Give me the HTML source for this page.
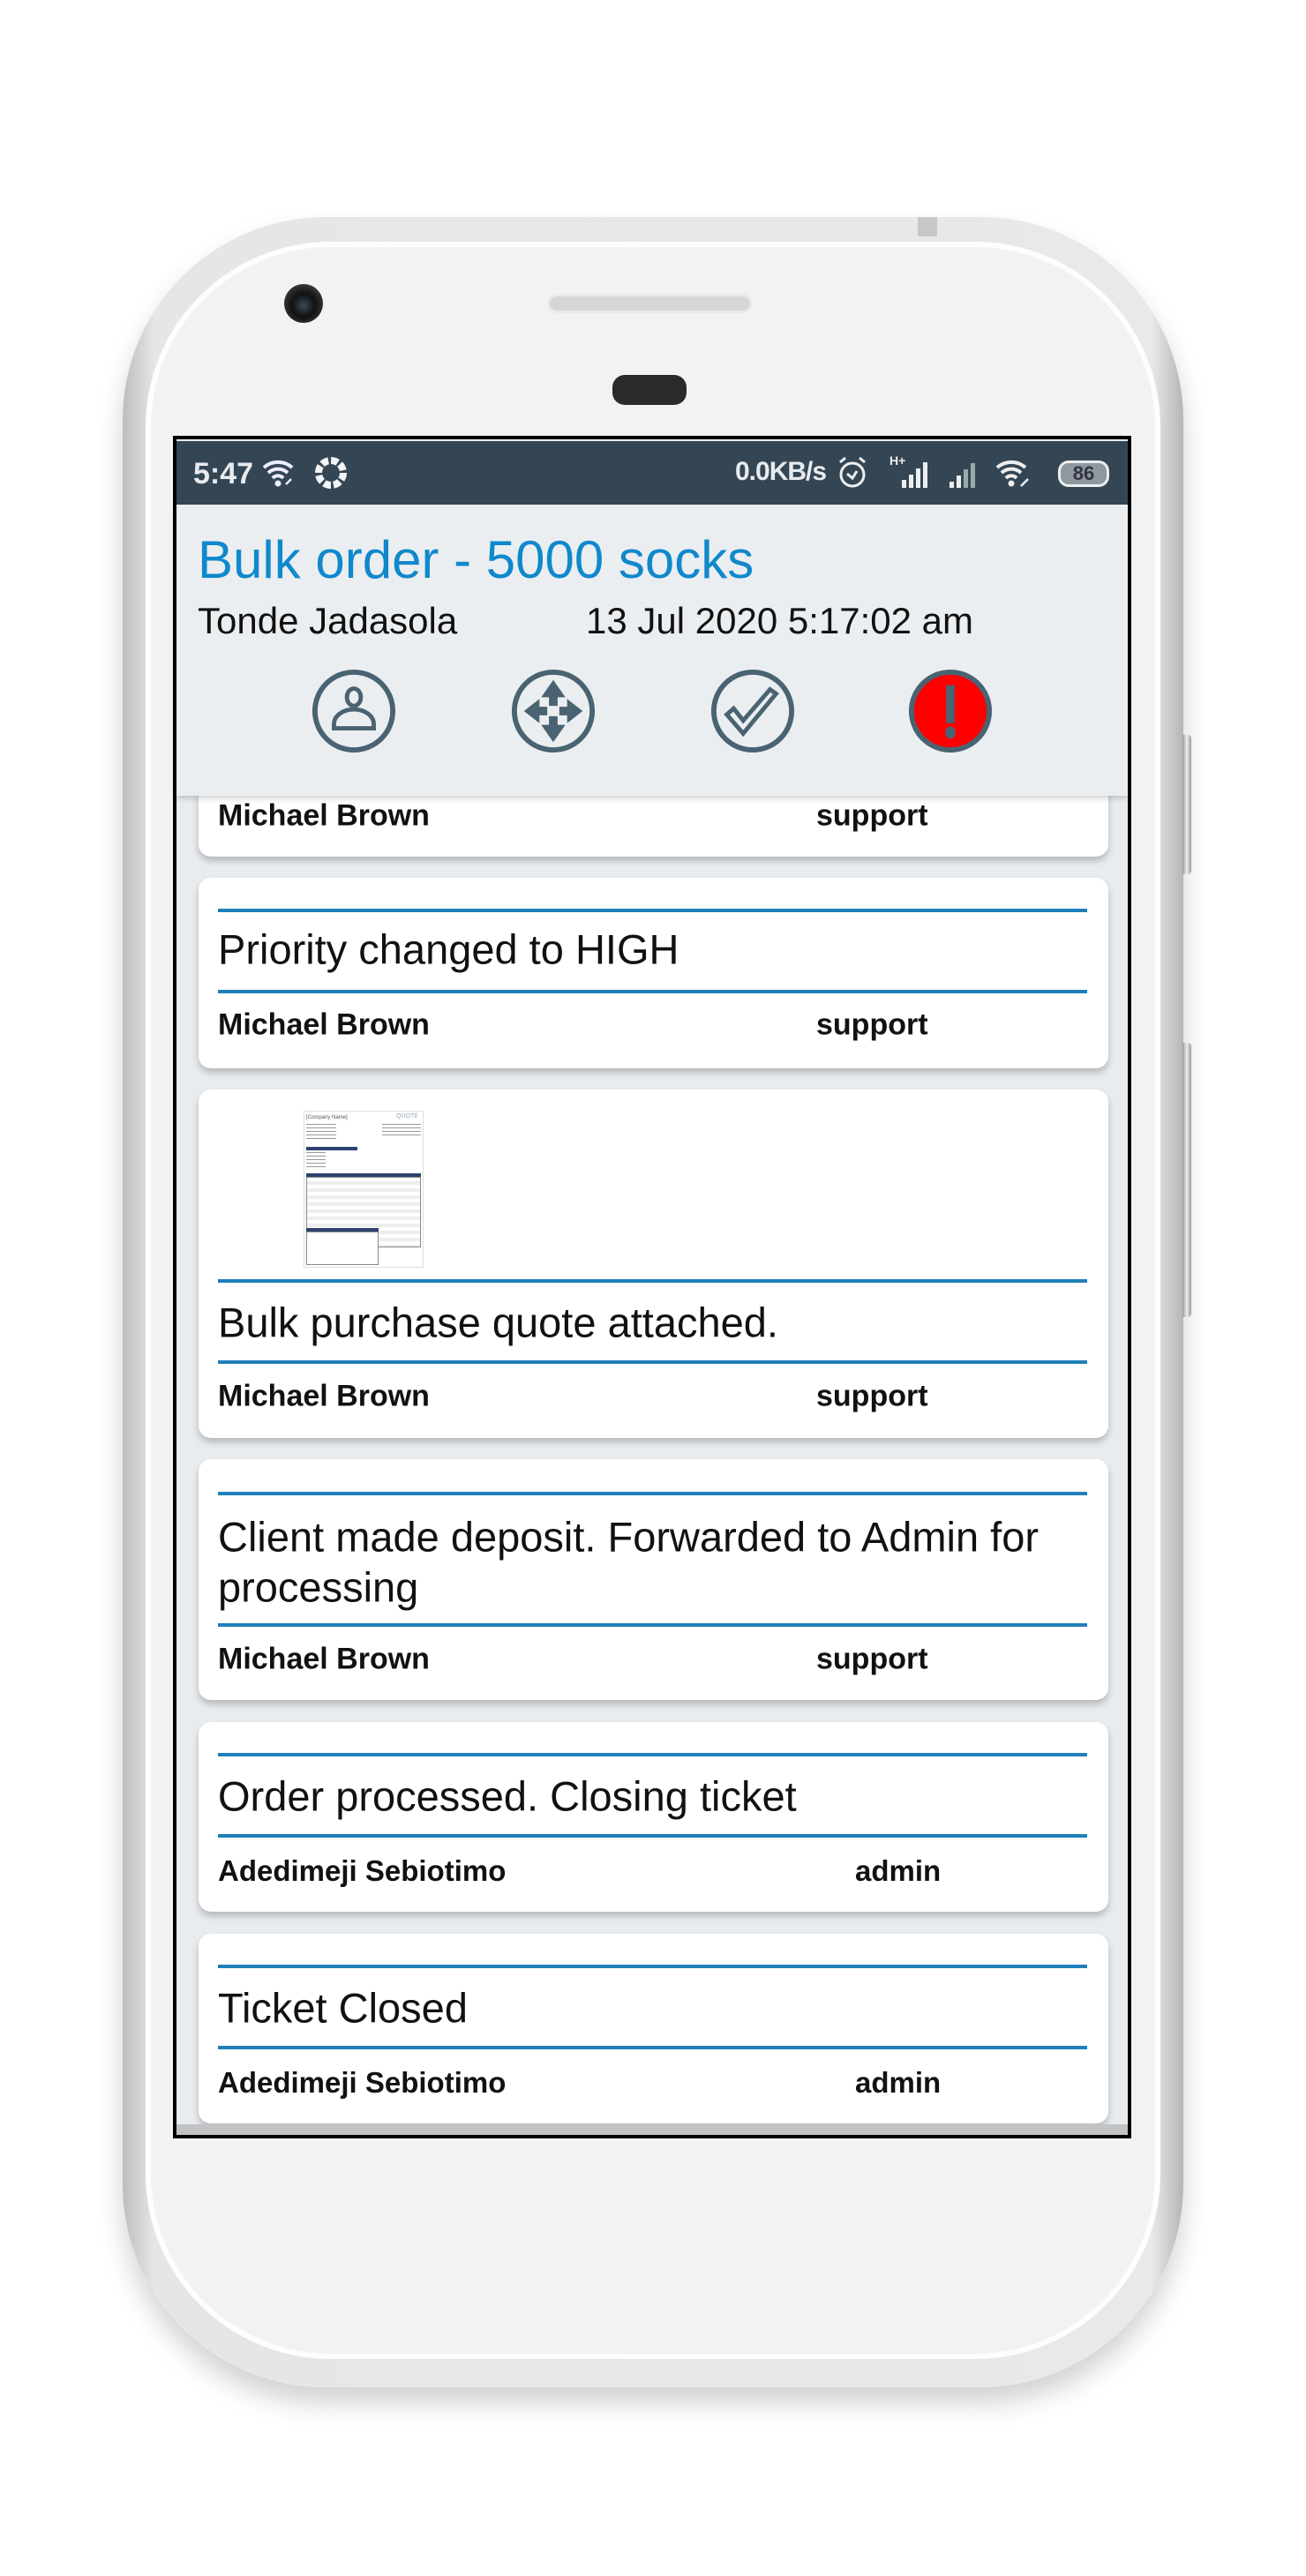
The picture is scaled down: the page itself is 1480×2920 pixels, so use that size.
<!DOCTYPE html>
<html><head><meta charset="utf-8">
<style>
*{margin:0;padding:0;box-sizing:border-box}
body{width:1480px;height:2920px;background:#fff;position:relative;overflow:hidden;font-family:"Liberation Sans",sans-serif}
.a{position:absolute}
.phone{left:139px;top:246px;width:1202px;height:2460px;border-radius:230px;background:linear-gradient(90deg,#bdbdbd,#e6e6e6 3%,#e9e9e9 97%,#b5b5b5);box-shadow:0 18px 30px rgba(0,0,0,.18)}
.bezel{left:165px;top:274px;width:1150px;height:2400px;border-radius:210px;background:#f2f2f2;border:6px solid #fdfdfd}
.screen{left:196px;top:494px;width:1086px;height:1930px;border:4px solid #000;background:#e9ecef;overflow:hidden}
.card{position:absolute;left:225px;width:1031px;background:#fff;border-radius:14px;box-shadow:0 5px 8px rgba(0,0,0,.22)}
.ln{position:absolute;left:247px;width:985px;height:4px;background:#1f7fba}
.msg{position:absolute;left:247px;font-size:47px;color:#111;line-height:57px;transform:translateY(-50%);white-space:nowrap}
.ft{position:absolute;font-size:34px;font-weight:bold;color:#111;transform:translateY(-50%);white-space:nowrap}
.ft2{font-size:33px}
.ic{position:absolute;top:757px;width:98px;height:98px}
</style></head><body>
<div class="a phone"></div>
<div class="a" style="left:1340px;top:833px;width:10px;height:158px;background:linear-gradient(90deg,#999,#eee,#999);border-radius:0 4px 4px 0"></div>
<div class="a" style="left:1340px;top:1182px;width:10px;height:311px;background:linear-gradient(90deg,#999,#eee,#999);border-radius:0 4px 4px 0"></div>
<div class="a" style="left:1040px;top:246px;width:22px;height:22px;background:#c8c8c8"></div>
<div class="a bezel"></div>
<div class="a" style="left:322px;top:322px;width:44px;height:44px;border-radius:50%;background:radial-gradient(circle at 50% 55%,#3a4a5a 0,#111 40%,#333 70%,#222 100%)"></div>
<div class="a" style="left:620px;top:333px;width:233px;height:22px;border-radius:11px;background:#d6d6d6;border:3px solid #eaeaea"></div>
<div class="a" style="left:694px;top:425px;width:84px;height:34px;border-radius:14px;background:#2a2a2a"></div>

<div class="a screen">
 <div class="a" style="left:0;top:2px;width:1078px;height:74px;background:#344654"></div>
</div>
<div class="a" style="left:219px;top:518px;font-size:34px;font-weight:bold;color:#e8ebee">5:47</div>
<svg class="a" style="left:296px;top:519px" width="40" height="36" viewBox="0 0 40 36"><path d="M3 11a24 24 0 0 1 32 0M8 17a16 16 0 0 1 22 0M13 23a8 8 0 0 1 12 0" stroke="#eef" stroke-width="4" fill="none"/><circle cx="19" cy="29" r="3.5" fill="#eef"/><path d="M28 30l6-6" stroke="#eef" stroke-width="2.5"/></svg>
<svg class="a" style="left:355px;top:516px" width="40" height="40" viewBox="0 0 40 40"><circle cx="20" cy="20" r="14" stroke="#f4f4f4" stroke-width="8" fill="none" stroke-dasharray="8 3"/></svg>
<div class="a" style="left:833px;top:518px;font-size:30px;font-weight:bold;color:#e8ebee;letter-spacing:-1px">0.0KB/s</div>
<svg class="a" style="left:948px;top:516px" width="36" height="40" viewBox="0 0 36 40"><circle cx="18" cy="22" r="13" stroke="#eee" stroke-width="3" fill="none"/><path d="M12 21l6 5 5-8M4 8l6-5M32 8l-6-5" stroke="#eee" stroke-width="3" fill="none"/></svg>
<div class="a" style="left:1008px;top:514px;font-size:14px;font-weight:bold;color:#eee">H+</div>
<svg class="a" style="left:1008px;top:522px" width="120" height="32" viewBox="0 0 120 32"><g fill="#eee"><rect x="14" y="22" width="5" height="9"/><rect x="22" y="16" width="5" height="15"/><rect x="30" y="9" width="5" height="22"/><rect x="38" y="2" width="5" height="29"/><rect x="68" y="24" width="5" height="7"/><rect x="76" y="17" width="5" height="14"/><rect x="84" y="10" width="5" height="21" fill="#9aa"/><rect x="92" y="3" width="5" height="28" fill="#9aa"/></g></svg>
<svg class="a" style="left:1127px;top:519px" width="44" height="36" viewBox="0 0 44 36"><path d="M3 11a24 24 0 0 1 32 0M8 17a16 16 0 0 1 22 0M13 23a8 8 0 0 1 12 0" stroke="#eee" stroke-width="4" fill="none"/><circle cx="19" cy="29" r="3.5" fill="#eee"/><path d="M30 32l8-8" stroke="#eee" stroke-width="2.5"/></svg>
<div class="a" style="left:1199px;top:522px;width:58px;height:30px;border:3px solid #eee;border-radius:12px;background:#8d989f;color:#334;font-size:22px;font-weight:bold;text-align:center;line-height:24px">86</div>

<!-- header -->
<div class="a" style="left:200px;top:572px;width:1078px;height:330px;background:#ebeef1;box-shadow:0 3px 6px rgba(0,0,0,.18);z-index:2"></div>
<div class="a" style="left:224px;top:600px;font-size:60px;color:#1088cc;z-index:3;white-space:nowrap">Bulk order - 5000 socks</div>
<div class="a" style="left:224px;top:680px;font-size:42px;color:#111;z-index:3">Tonde Jadasola</div>
<div class="a" style="left:664px;top:680px;font-size:42px;color:#111;z-index:3;white-space:nowrap">13 Jul 2020 5:17:02 am</div>
<svg class="ic" style="left:352px;z-index:3" viewBox="0 0 100 100"><circle cx="50" cy="50" r="45" fill="none" stroke="#4a6372" stroke-width="6"/><ellipse cx="50" cy="34" rx="8" ry="10" fill="none" stroke="#4a6372" stroke-width="5"/><path d="M27 70v-5a23 17 0 0 1 46 0v5z" fill="none" stroke="#4a6372" stroke-width="5"/></svg>
<svg class="ic" style="left:578px;z-index:3" viewBox="0 0 100 100"><circle cx="50" cy="50" r="45" fill="none" stroke="#4a6372" stroke-width="6"/><g fill="#4a6372"><path d="M50 14l-14 20h9v10h10v-10h9z"/><path d="M50 86l-14-20h9v-10h10v10h9z"/><path d="M16 50l18-14v9h9v10h-9v9z"/><path d="M84 50l-18-14v9h-9v10h9v9z"/></g></svg>
<svg class="ic" style="left:804px;z-index:3" viewBox="0 0 100 100"><circle cx="50" cy="50" r="45" fill="none" stroke="#4a6372" stroke-width="6"/><path d="M20 54l8-7 11 14 31-36 7 5-38 46z" fill="none" stroke="#4a6372" stroke-width="5" stroke-linejoin="miter"/></svg>
<svg class="ic" style="left:1028px;z-index:3" viewBox="0 0 100 100"><circle cx="50" cy="50" r="45" fill="#f00" stroke="#4a6372" stroke-width="6"/><rect x="45" y="20" width="10" height="44" fill="#4a6372"/><ellipse cx="50" cy="75" rx="6" ry="7" fill="#4a6372"/></svg>

<!-- card 0 -->
<div class="card" style="top:880px;height:91px"></div>
<div class="ft" style="left:247px;top:925px">Michael Brown</div>
<div class="ft" style="left:925px;top:925px">support</div>

<!-- card 1 -->
<div class="card" style="top:995px;height:216px"></div>
<div class="ln" style="top:1030px"></div>
<div class="msg" style="top:1076px">Priority changed to HIGH</div>
<div class="ln" style="top:1122px"></div>
<div class="ft" style="left:247px;top:1162px">Michael Brown</div>
<div class="ft" style="left:925px;top:1162px">support</div>

<!-- card 2 -->
<div class="card" style="top:1235px;height:395px"></div>
<div class="a" style="left:344px;top:1259px;width:136px;height:178px;background:#fff;border:1px solid #ddd">
 <div class="a" style="left:2px;top:4px;font-size:6px;color:#555">[Company Name]</div>
 <div class="a" style="left:104px;top:2px;font-size:7px;color:#9ab">QUOTE</div>
 <div class="a" style="left:2px;top:14px;width:34px;height:20px;background:repeating-linear-gradient(#999 0 1px,#fff 1px 4px)"></div>
 <div class="a" style="left:88px;top:14px;width:44px;height:16px;background:repeating-linear-gradient(#999 0 1px,#fff 1px 4px)"></div>
 <div class="a" style="left:2px;top:40px;width:58px;height:4px;background:#2e4270"></div>
 <div class="a" style="left:2px;top:46px;width:22px;height:20px;background:repeating-linear-gradient(#999 0 1px,#fff 1px 4px)"></div>
 <div class="a" style="left:2px;top:70px;width:130px;height:4px;background:#2e4270"></div>
 <div class="a" style="left:2px;top:74px;width:130px;height:80px;border:1px solid #888;background:repeating-linear-gradient(#fff 0 4px,#eee 4px 8px)"></div>
 <div class="a" style="left:2px;top:132px;width:82px;height:4px;background:#2e4270"></div>
 <div class="a" style="left:2px;top:136px;width:82px;height:38px;border:1px solid #888;background:#fff"></div>
</div>
<div class="ln" style="top:1450px"></div>
<div class="msg" style="top:1499px">Bulk purchase quote attached.</div>
<div class="ln" style="top:1542px"></div>
<div class="ft" style="left:247px;top:1583px">Michael Brown</div>
<div class="ft" style="left:925px;top:1583px">support</div>

<!-- card 3 -->
<div class="card" style="top:1654px;height:273px"></div>
<div class="ln" style="top:1691px"></div>
<div class="msg" style="top:1742px">Client made deposit. Forwarded to Admin for</div>
<div class="msg" style="top:1799px">processing</div>
<div class="ln" style="top:1840px"></div>
<div class="ft" style="left:247px;top:1881px">Michael Brown</div>
<div class="ft" style="left:925px;top:1881px">support</div>

<!-- card 4 -->
<div class="card" style="top:1952px;height:215px"></div>
<div class="ln" style="top:1987px"></div>
<div class="msg" style="top:2036px">Order processed. Closing ticket</div>
<div class="ln" style="top:2079px"></div>
<div class="ft ft2" style="left:247px;top:2121px">Adedimeji Sebiotimo</div>
<div class="ft ft2" style="left:969px;top:2121px">admin</div>

<!-- card 5 -->
<div class="card" style="top:2192px;height:215px"></div>
<div class="ln" style="top:2227px"></div>
<div class="msg" style="top:2276px">Ticket Closed</div>
<div class="ln" style="top:2319px"></div>
<div class="ft ft2" style="left:247px;top:2361px">Adedimeji Sebiotimo</div>
<div class="ft ft2" style="left:969px;top:2361px">admin</div>
<div class="a" style="left:200px;top:2408px;width:1078px;height:12px;background:#c1c3c5"></div>
</body></html>
